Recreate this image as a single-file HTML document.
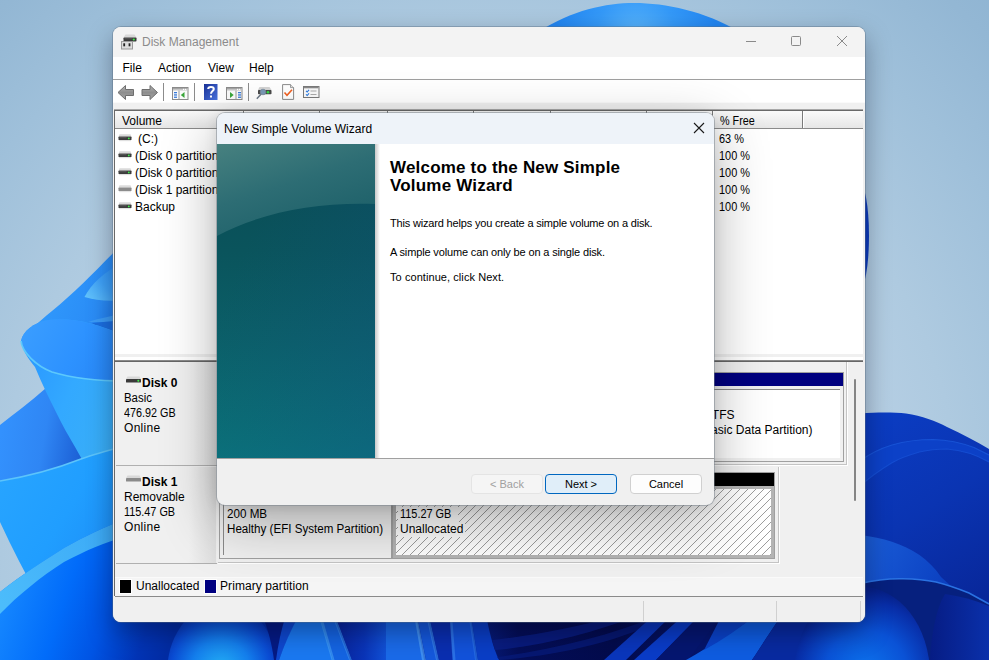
<!DOCTYPE html>
<html>
<head>
<meta charset="utf-8">
<title>Disk Management</title>
<style>
html,body{margin:0;padding:0;}
body{width:989px;height:660px;overflow:hidden;position:relative;background:#b4cbde;font-family:"Liberation Sans",sans-serif;font-size:12px;color:#000;}
.abs{position:absolute;}
#wall{position:absolute;left:0;top:0;width:989px;height:660px;}
/* main window */
#win{position:absolute;left:113px;top:27px;width:752px;height:595px;background:#f0f0f0;border-radius:8px;box-shadow:0 0 0 1px rgba(90,110,130,.4),0 10px 26px rgba(0,0,20,.36);overflow:hidden;}
#titlebar{position:absolute;left:0;top:0;width:752px;height:30px;background:#f3f3f3;}
#title{position:absolute;left:29px;top:8px;font-size:12px;color:#8b8b8b;white-space:nowrap;}
#menubar{position:absolute;left:0;top:30px;width:752px;height:22px;background:#fff;}
.menu{position:absolute;top:4px;font-size:12px;color:#000;white-space:nowrap;}
#mline{position:absolute;left:0;top:52px;width:752px;height:1px;background:#a0a0a0;}
#toolbar{position:absolute;left:0;top:53px;width:752px;height:23px;background:#fff;}
#tshade{position:absolute;left:0;top:75px;width:752px;height:7px;background:#f0f0f0;border-top:1px solid #fafafa;box-sizing:border-box}
/* list view */
#list{position:absolute;left:1px;top:83px;width:748px;height:244px;background:#fff;border-top:1px solid #696969;border-left:1px solid #696969;box-shadow:0 -1px 0 #a8a8a8;}
#lhead{position:absolute;left:0;top:0;width:748px;height:17px;background:linear-gradient(#fafafa,#e6e6e6);border-bottom:1px solid #8a8a8a;}
.hsep{position:absolute;top:0;width:1px;height:17px;background:#7a7a7a;box-shadow:1px 0 0 #fff;}
.htxt{position:absolute;top:3px;font-size:12px;white-space:nowrap;}
.row{position:absolute;left:0;font-size:12px;white-space:nowrap;height:17px;line-height:17px;}

.tsep{position:absolute;top:3px;width:1px;height:18px;background:#8c8c8c;}
.ico{position:absolute;}
#split{position:absolute;left:2px;top:327px;width:748px;height:7px;background:linear-gradient(#f0f0f0 0,#f0f0f0 3px,#fff 3px,#fff 6px,#8a8a8a 6px);border-bottom:1px solid #666;}
#gpane{position:absolute;left:3px;top:335px;width:731px;height:215px;background:#f0f0f0;}
.dlabel{position:absolute;left:0;width:100px;background:linear-gradient(90deg,#f0f0f0 0,#f0f0f0 70%,#e2e2e2 100%);border-right:1px solid #b8b8b8;border-bottom:1px solid #a8a8a8;}
.dl{position:absolute;left:8px;font-size:12px;white-space:nowrap;line-height:15px;}
.dlb{position:absolute;left:26px;font-size:12px;font-weight:bold;white-space:nowrap;line-height:15px;}
#legend{position:absolute;left:2px;top:550px;width:748px;height:18px;background:#f5f5f5;border-top:1px solid #fafafa;border-bottom:1px solid #8a8a8a;}
#vframe{position:absolute;left:1px;top:83px;width:749px;height:486px;border-left:1px solid #696969;pointer-events:none;}
#status{position:absolute;left:0;top:572px;width:752px;height:23px;background:#f0f0f0;}
.ssep{position:absolute;top:2px;width:1px;height:20px;background:#d0d0d0;}

#side{background:#0f626c;}
#h1{position:absolute;left:15px;top:14.5px;font-size:17px;font-weight:bold;line-height:18.8px;white-space:nowrap;letter-spacing:0.19px;}
.p{position:absolute;left:15px;font-size:11px;white-space:nowrap;line-height:13px;}
#csh{position:absolute;left:158px;top:31px;width:5px;height:314px;background:linear-gradient(90deg,#c8c8c8,#fff);}
.part{position:absolute;background:#fff;border:1px solid #a8a8a8;box-shadow:0 0 0 1px #dcdcdc;}
.pt{position:absolute;font-size:12px;white-space:nowrap;line-height:15px;}
/* dialog */
#dlg{position:absolute;left:217px;top:113px;width:497px;height:392px;background:#f0f0f0;border-radius:8px;box-shadow:0 0 0 1px rgba(120,130,140,.5),0 18px 56px rgba(0,0,0,.31),0 2px 14px rgba(0,0,0,.11);overflow:hidden;}
#dtitle{position:absolute;left:0;top:0;width:497px;height:31px;background:#eef3f9;}
#dtt{position:absolute;left:7px;top:9px;font-size:12px;white-space:nowrap;}
#side{position:absolute;left:0;top:31px;width:158px;height:314px;}
#content{position:absolute;left:158px;top:31px;width:339px;height:314px;background:#fff;}
#dsep{position:absolute;left:0;top:345px;width:497px;height:1px;background:#a0a0a0;}
.btn{position:absolute;top:361px;height:18px;width:70px;border:1px solid #d0d0d0;border-radius:4px;background:#fdfdfd;font-size:11px;text-align:center;line-height:18px;}
</style>
</head>
<body>
<svg id="wall" viewBox="0 0 989 660">
<defs>
<radialGradient id="bg" gradientUnits="userSpaceOnUse" cx="480" cy="520" r="800">
<stop offset="0" stop-color="rgb(190,212,230)"/><stop offset="0.5" stop-color="rgb(182,207,228)"/><stop offset="0.6" stop-color="rgb(174,202,224)"/><stop offset="0.75" stop-color="rgb(159,192,218)"/><stop offset="0.875" stop-color="rgb(147,183,212)"/><stop offset="1" stop-color="rgb(138,177,208)"/>
</radialGradient>
<radialGradient id="topb" gradientUnits="userSpaceOnUse" cx="636" cy="34" r="80"><stop offset="0" stop-color="#58b4fb"/><stop offset="0.5" stop-color="#3499f8"/><stop offset="1" stop-color="#2286f2"/></radialGradient>
<linearGradient id="pA" gradientUnits="userSpaceOnUse" x1="50" y1="300" x2="125" y2="330"><stop offset="0" stop-color="#2f97fb"/><stop offset="0.6" stop-color="#2a8cf6"/><stop offset="1" stop-color="#1d74e6"/></linearGradient>
<linearGradient id="lens" gradientUnits="userSpaceOnUse" x1="86" y1="300" x2="120" y2="268"><stop offset="0" stop-color="#66c6fb"/><stop offset="0.5" stop-color="#3fa2f8"/><stop offset="1" stop-color="#2c90f6"/></linearGradient>
<linearGradient id="pBin" gradientUnits="userSpaceOnUse" x1="25" y1="325" x2="125" y2="380"><stop offset="0" stop-color="#3a9dff"/><stop offset="0.5" stop-color="#2d92ff"/><stop offset="1" stop-color="#2684f4"/></linearGradient>
<linearGradient id="pBout" gradientUnits="userSpaceOnUse" x1="30" y1="380" x2="125" y2="420"><stop offset="0" stop-color="#2c9cff"/><stop offset="0.4" stop-color="#33a9ff"/><stop offset="1" stop-color="#39aef6"/></linearGradient>
<linearGradient id="pC" gradientUnits="userSpaceOnUse" x1="0" y1="440" x2="85" y2="455"><stop offset="0" stop-color="#3391fd"/><stop offset="0.5" stop-color="#2f86f4"/><stop offset="0.85" stop-color="#2068dc"/><stop offset="1" stop-color="#1b5ed2"/></linearGradient>
<linearGradient id="pD" gradientUnits="userSpaceOnUse" x1="0" y1="480" x2="125" y2="560"><stop offset="0" stop-color="#27a4ff"/><stop offset="0.5" stop-color="#209eff"/><stop offset="1" stop-color="#1c8cf6"/></linearGradient>
<linearGradient id="pE" gradientUnits="userSpaceOnUse" x1="0" y1="600" x2="165" y2="655"><stop offset="0" stop-color="#1688ff"/><stop offset="0.35" stop-color="#016cfa"/><stop offset="0.6" stop-color="#0054e4"/><stop offset="0.85" stop-color="#0234b6"/><stop offset="1" stop-color="#022ca4"/></linearGradient>
<linearGradient id="rim" gradientUnits="userSpaceOnUse" x1="0" y1="600" x2="125" y2="525"><stop offset="0" stop-color="#4cbcfb"/><stop offset="1" stop-color="#3aa8f6"/></linearGradient>
<radialGradient id="bulb" gradientUnits="userSpaceOnUse" cx="221" cy="668" r="62"><stop offset="0" stop-color="#24aef4"/><stop offset="0.45" stop-color="#1480ee"/><stop offset="0.8" stop-color="#0a4cd4"/><stop offset="1" stop-color="#0734b4"/></radialGradient>
<radialGradient id="ball" gradientUnits="userSpaceOnUse" cx="866" cy="672" r="82"><stop offset="0" stop-color="#0c74ee"/><stop offset="0.5" stop-color="#0a52d6"/><stop offset="0.85" stop-color="#082ea8"/><stop offset="1" stop-color="#062088"/></radialGradient>
<linearGradient id="rdark" gradientUnits="userSpaceOnUse" x1="870" y1="420" x2="980" y2="600"><stop offset="0" stop-color="#0b3cc2"/><stop offset="0.5" stop-color="#0a34b2"/><stop offset="1" stop-color="#08279a"/></linearGradient>
<linearGradient id="rP4" gradientUnits="userSpaceOnUse" x1="865" y1="540" x2="970" y2="600"><stop offset="0" stop-color="#1a5cd6"/><stop offset="0.6" stop-color="#0e46c6"/><stop offset="1" stop-color="#0a36b4"/></linearGradient>
<linearGradient id="navy" gradientUnits="userSpaceOnUse" x1="486" y1="0" x2="700" y2="0"><stop offset="0" stop-color="#061a78"/><stop offset="0.15" stop-color="#040e58"/><stop offset="0.6" stop-color="#030b4c"/><stop offset="1" stop-color="#05156c"/></linearGradient>
<linearGradient id="wsh" x1="0" y1="0" x2="0" y2="1"><stop offset="0" stop-color="#000428" stop-opacity=".45"/><stop offset="1" stop-color="#000428" stop-opacity="0"/></linearGradient>
<linearGradient id="gA" gradientUnits="userSpaceOnUse" x1="338" y1="0" x2="390" y2="0"><stop offset="0" stop-color="#08249c"/><stop offset="0.5" stop-color="#0a34b8"/><stop offset="1" stop-color="#1256dc"/></linearGradient>
<linearGradient id="rr" gradientUnits="userSpaceOnUse" x1="930" y1="0" x2="989" y2="0"><stop offset="0" stop-color="#061c84"/><stop offset="1" stop-color="#0a30aa"/></linearGradient>
</defs>
<rect width="989" height="660" fill="url(#bg)"/>
<!-- top arc -->
<path d="M538 32 C572 10 606 3 634 3 C666 3 704 11 740 32 Z" fill="url(#topb)"/>
<!-- right sliver -->
<ellipse cx="859" cy="236" rx="10" ry="54" fill="#0c3cc0"/>
<!-- left petals -->
<path d="M125 241 C104 262 78 290 52 311 C45 317 38 322 32 329 L125 350 Z" fill="url(#pA)"/>
<path d="M84.500 297 C91 284 104 272 125 261 L125 300 C108 302 95 300 84.500 297 Z" fill="url(#lens)"/>
<path d="M88 322 C100 318 112 316 125 313 L125 322 C112 322 100 322 88 322 Z" fill="#3b9bf6"/>
<path d="M92 323 C104 322 114 321 125 320 L125 345 Z" fill="#1b6ee0"/>
<!-- petal C lower-left -->
<path d="M46 388 C30 402 14 414 0 425 L0 500 L120 500 L120 420 Z" fill="url(#pC)"/>
<!-- petal B cup -->
<path d="M21 341 C23 331 33 323 48 320 C68 317 95 322 125 336 L125 470 L88 470 C76 448 66 432 61 422 C50 400 42 384 35 367 C28 358 22 350 21 341 Z" fill="url(#pBout)"/>
<path d="M21 341 C23 331 33 323 48 320 C68 317 95 322 125 336 L125 381 C100 381 72 378 52 372 C36 366 22 352 21 341 Z" fill="url(#pBin)"/>
<path d="M21 341 C22 352 36 366 52 372 C72 378 100 381 125 381" fill="none" stroke="#62cdfc" stroke-width="1.8" stroke-opacity=".9"/>
<!-- petal D -->
<path d="M0 481 C30 476 58 468 81 459 C95 454 110 450 125 446 L125 600 L40 600 C26 575 12 548 0 522 Z" fill="url(#pD)"/>
<path d="M0 481 C30 476 58 468 81 459 C95 454 110 450 125 446" fill="none" stroke="#5cc4fb" stroke-width="1.6"/>
<!-- petal E (big bottom-left) -->
<path d="M0 592 C20 576 45 560 64 548 C85 536 105 527 125 519 L125 615 L200 615 L200 660 L0 660 Z" fill="url(#pE)"/>
<path d="M0 592 C20 576 45 560 64 548 C85 536 105 527 125 519 L125 537 C105 542 85 551 64 562 C42 576 18 595 0 614 Z" fill="url(#rim)"/>
<!-- bottom strip -->
<rect x="199" y="615" width="291" height="45" fill="#032ea8"/>
<path d="M190 615 C176 630 170 645 168 660 L276 660 C274 640 266 625 254 615 Z" fill="url(#bulb)"/>
<path d="M262 615 L300 615 C290 630 282 645 276 660 L274 660 C272 645 268 628 262 615 Z" fill="#051a84"/>
<path d="M286 615 L300 615 C292 630 284 645 279 660 L276 660 C278 645 281 630 286 615 Z" fill="#0e48d0"/>
<path d="M299 615 L320 615 L333 660 L279 660 C284 645 291 630 299 615 Z" fill="#1a78f0"/>
<path d="M319 615 L333 615 L350 660 L333 660 Z" fill="#1464e2"/>
<path d="M318.500 615 L321.500 615 L334.500 660 L331.500 660 Z" fill="#4aa8f8" opacity=".55"/>
<path d="M332 615 L335 615 L352 660 L349 660 Z" fill="#3f98f4" opacity=".55"/>
<path d="M335 615 L388 615 L388 660 L352 660 Z" fill="url(#gA)"/>
<path d="M386 615 L416 615 L424 660 L386 660 Z" fill="#1a6ae8"/>
<path d="M414 615 L417 615 L426 660 L422 660 Z" fill="#56a6f6" opacity=".6"/>
<path d="M417 615 L427 615 L437 660 L426 660 Z" fill="#1458dc"/>
<path d="M426 615 L429 615 L439 660 L436 660 Z" fill="#3f8cf0" opacity=".6"/>
<path d="M429 615 L451 615 L454 660 L439 660 Z" fill="#0a2eb0"/>
<path d="M450 615 L470 615 L476 660 L453 660 Z" fill="#1252da"/>
<path d="M449.500 615 L452 615 L455.500 660 L452.500 660 Z" fill="#3a86ee" opacity=".6"/>
<path d="M468.500 615 L471 615 L478 660 L475 660 Z" fill="#2f78ea" opacity=".6"/>
<path d="M471 615 L487 615 C490 630 494 648 500 660 L478 660 Z" fill="#0a3ec6"/>
<path d="M486 615 L790 615 L790 660 L499 660 C493 648 489 630 486 615 Z" fill="url(#navy)"/>
<path d="M492 640 C530 636 575 628 620 615 L640 615 C590 634 540 646 495 650 Z" fill="#0a1e84" opacity=".8"/>
<path d="M497 657 C550 650 610 636 660 615 L672 615 C620 642 560 655 500 660 Z" fill="#081a78" opacity=".8"/>
<path d="M604 660 L654 615 L672 615 L626 660 Z" fill="#0a36bc"/>
<path d="M634 660 L684 615 L700 615 L656 660 Z" fill="#0a3cc8"/>
<path d="M656 660 L700 615 L722 615 L688 660 Z" fill="#051670"/>
<path d="M686 660 C712 645 736 630 756 615 L782 615 C770 632 760 648 752 660 Z" fill="#0e5ce0"/>
<path d="M722 615 L756 615 C740 628 722 640 704 650 Z" fill="#0a42c8"/>
<path d="M752 660 C760 648 770 632 782 615 L870 615 L870 660 Z" fill="#082aa0"/>
<!-- right side petals -->
<path d="M860 413.500 C880 412 895 412.500 906 413.500 C922 416 936 421 947 427 C962 434 976 441 989 449 L989 660 L860 660 Z" fill="url(#rdark)"/>
<path d="M860 461 C872 452 882 448 892 445 C906 441 920 439.500 933 439.500 C948 440 962 443 974 447.500 L989 455 L989 462 C975 454 960 450 947 449 C937 449 928 450 919.500 452 C909 455 900 458 892 462.700 C880 470 870 477 860 486 Z" fill="#0e44cc" opacity=".75"/>
<path d="M860 486 C870 477 880 470 892 462.700 C900 458 909 455 919.500 452 C928 450 937 449 947 449 C960 450 975 454 989 462" fill="none" stroke="#1650d4" stroke-width="1.2" opacity=".8"/>
<path d="M860 461 C872 452 882 448 892 445 C906 441 920 439.500 933 439.500 C948 440 962 443 974 447.500 L989 455" fill="none" stroke="#1a58da" stroke-width="1.2" opacity=".8"/>
<path d="M860 535 C872 536.500 882 538.500 892 541.700 C902 545 911 549.500 919.500 555 C928 561 935 568 941 577 C958 592 975 608 989 626 L989 660 L860 660 Z" fill="url(#rP4)"/>
<path d="M860 583.500 C875 580 890 578.500 903 578.800 C915 579 926 580 936 582 C948 585 959 589 969 593 L989 604 L989 660 L860 660 Z" fill="#06207e"/>
<path d="M860 583.500 C875 580 890 578.500 903 578.800 C915 579 926 580 936 582 C948 585 959 589 969 593 L989 604" fill="none" stroke="#2a72e2" stroke-width="1.6"/>
<path d="M930 660 L989 660 L989 606 C975 600 960 596 945 594 C935 610 931 640 930 660 Z" fill="url(#rr)"/>
<ellipse cx="862" cy="675" rx="68" ry="88" fill="url(#ball)"/>
<!-- window shadow onto wallpaper below -->
</svg>

<div id="win">
  <div id="titlebar">
    <svg class="ico" style="left:8px;top:7px" width="17" height="16" viewBox="0 0 17 16">
      <path d="M4.5 0.5 L13.5 0.5 L15.5 3.5 L2.5 3.5 Z" fill="#d8d8d8"/>
      <rect x="2.5" y="3.5" width="13" height="4" rx="0.8" fill="#3a3a3a"/>
      <rect x="3.5" y="4.3" width="8" height="1" fill="#5a5a5a"/>
      <circle cx="12.8" cy="5.5" r="1.1" fill="#3ef04a"/>
      <rect x="0.5" y="7.5" width="11" height="7.5" fill="#dcdcdc" stroke="#9a9a9a" stroke-width="1"/>
      <rect x="2.3" y="9.3" width="1.8" height="3" fill="#222"/>
      <rect x="7.6" y="9.3" width="1.8" height="3" fill="#222"/>
    </svg>
    <div id="title">Disk Management</div>
    <svg class="ico" style="left:632px;top:8px" width="110" height="14" viewBox="0 0 110 14">
      <path d="M1 6.5 H11" stroke="#8a8a8a" stroke-width="1" fill="none"/>
      <rect x="46.5" y="1.5" width="9" height="9" rx="1" stroke="#8a8a8a" stroke-width="1" fill="none"/>
      <path d="M92 1 L102 11 M102 1 L92 11" stroke="#8a8a8a" stroke-width="1" fill="none"/>
    </svg>
  </div>
  <div id="menubar">
    <div class="menu" style="left:9.5px">File</div>
    <div class="menu" style="left:45px">Action</div>
    <div class="menu" style="left:95px">View</div>
    <div class="menu" style="left:136px">Help</div>
  </div>
  <div id="mline"></div>
  <div id="toolbar">
    <!-- back / forward arrows -->
    <svg class="ico" style="left:4px;top:4px" width="42" height="17" viewBox="0 0 42 17"><defs><linearGradient id="ag" x1="0" y1="0" x2="0" y2="1"><stop offset="0" stop-color="#b4b4b4"/><stop offset="0.5" stop-color="#8e8e8e"/><stop offset="1" stop-color="#a4a4a4"/></linearGradient></defs>
      <path d="M1 8.5 L8.5 1.5 L8.5 5.5 L16.5 5.5 L16.5 11.5 L8.5 11.5 L8.5 15.5 Z" fill="url(#ag)" stroke="#6e6e6e" stroke-width="1" stroke-linejoin="round"/>
      <path d="M40.5 8.5 L33 1.5 L33 5.5 L25 5.5 L25 11.5 L33 11.5 L33 15.5 Z" fill="url(#ag)" stroke="#6e6e6e" stroke-width="1" stroke-linejoin="round"/>
    </svg>
    <div class="tsep" style="left:50px"></div>
    <!-- console tree -->
    <svg class="ico" style="left:59px;top:7px" width="17" height="13" viewBox="0 0 17 13">
      <rect x="0.5" y="0.5" width="15.5" height="12" fill="#fafafa" stroke="#8a8a8a"/>
      <rect x="1" y="1" width="14.5" height="2.5" fill="#c6c6c6"/><rect x="1" y="1" width="14.5" height="0.8" fill="#9c9c9c"/><rect x="11" y="1.8" width="1.2" height="1.2" fill="#fff"/><rect x="13" y="1.8" width="1.2" height="1.2" fill="#fff"/>
      <rect x="6.5" y="3.5" width="1" height="9" fill="#9a9a9a"/>
      <rect x="2" y="5" width="3" height="1.3" fill="#3a7ad8"/><rect x="2" y="7.3" width="3" height="1.3" fill="#3a7ad8"/><rect x="2" y="9.6" width="3" height="1.3" fill="#3a7ad8"/>
      <path d="M12.5 5 L12.5 11 L8.8 8 Z" fill="#3aa53a"/>
    </svg>
    <div class="tsep" style="left:81px"></div>
    <!-- help -->
    <svg class="ico" style="left:91px;top:4px" width="14" height="16" viewBox="0 0 14 16">
      <defs><linearGradient id="hg" x1="0" y1="0" x2="1" y2="1"><stop offset="0" stop-color="#1a3296"/><stop offset="1" stop-color="#4a74e0"/></linearGradient></defs>
      <rect x="0" y="0" width="13.5" height="16" fill="url(#hg)"/>
      <path d="M4.2 5 C4.2 2.2 9.8 2.2 9.8 5 C9.8 7 7 7.2 7 9.8" stroke="#fff" stroke-width="2" fill="none"/>
      <rect x="6" y="11.5" width="2" height="2" fill="#fff"/>
    </svg>
    <!-- action pane -->
    <svg class="ico" style="left:113px;top:7px" width="17" height="13" viewBox="0 0 17 13">
      <rect x="0.5" y="0.5" width="15.5" height="12" fill="#fafafa" stroke="#8a8a8a"/>
      <rect x="1" y="1" width="14.5" height="2.5" fill="#c6c6c6"/><rect x="1" y="1" width="14.5" height="0.8" fill="#9c9c9c"/><rect x="11" y="1.8" width="1.2" height="1.2" fill="#fff"/><rect x="13" y="1.8" width="1.2" height="1.2" fill="#fff"/>
      <rect x="9.5" y="3.5" width="1" height="9" fill="#9a9a9a"/>
      <rect x="12" y="5" width="3" height="1.3" fill="#3a7ad8"/><rect x="12" y="7.3" width="3" height="1.3" fill="#3a7ad8"/><rect x="12" y="9.6" width="3" height="1.3" fill="#3a7ad8"/>
      <path d="M4 5 L4 11 L7.7 8 Z" fill="#3aa53a"/>
    </svg>
    <div class="tsep" style="left:135px"></div>
    <!-- rescan -->
    <svg class="ico" style="left:143px;top:6px" width="17" height="14" viewBox="0 0 17 14">
      <path d="M3.5 1 L13.5 1 L15.5 4 L2 4 Z" fill="#d4d4d4"/>
      <rect x="2" y="4" width="13.5" height="4.3" rx="0.8" fill="#4a4a4a"/>
      <circle cx="12" cy="6.2" r="1.3" fill="#35e045"/>
      <circle cx="7" cy="6" r="2.8" fill="#8ab4dc" fill-opacity=".75" stroke="#7a8a9a" stroke-width="0.9"/>
      <path d="M5 8.2 L0.8 12.8" stroke="#6a7684" stroke-width="1.4"/>
    </svg>
    <!-- page check -->
    <svg class="ico" style="left:169px;top:4px" width="13" height="16" viewBox="0 0 13 16">
      <path d="M0.6 0.6 L8.5 0.6 L11.6 3.6 L11.6 15.4 L0.6 15.4 Z" fill="#fff" stroke="#8a8a8a"/>
      <path d="M8.5 0.6 L8.5 3.6 L11.6 3.6" fill="#e0e0e0" stroke="#8a8a8a" stroke-width="0.8"/>
      <path d="M2.5 8.5 L5 11.2 L10 5.8" fill="none" stroke="#f06020" stroke-width="1.6"/>
    </svg>
    <!-- checklist -->
    <svg class="ico" style="left:190px;top:6px" width="17" height="12" viewBox="0 0 17 12">
      <rect x="0.5" y="0.5" width="15.5" height="11" fill="#fafafa" stroke="#7a7a7a"/>
      <rect x="1" y="1" width="14.5" height="1.3" fill="#8a8a8a"/>
      <path d="M3 4.8 L4.2 6 L6 3.8 M3 8.3 L4.2 9.5 L6 7.3" fill="none" stroke="#2a7ae0" stroke-width="1.1"/>
      <rect x="7.5" y="4.5" width="6" height="1" fill="#aaa"/><rect x="7.5" y="8" width="6" height="1" fill="#aaa"/>
    </svg>
  </div>
  <div id="tshade"></div>
  <div id="list">
    <div id="lhead">
      <div class="htxt" style="left:7px">Volume</div>
      <div class="hsep" style="left:128px"></div>
      <div class="hsep" style="left:204px"></div>
      <div class="hsep" style="left:272px"></div>
      <div class="hsep" style="left:358px"></div>
      <div class="hsep" style="left:435px"></div>
      <div class="hsep" style="left:531px"></div>
      <div class="hsep" style="left:597px"></div>
      <div class="htxt" style="left:605px;transform:scaleX(.9);transform-origin:0 0">% Free</div>
      <div class="hsep" style="left:687px"></div>
    </div>
    <svg class="ico" style="left:3px;top:23px" width="14" height="8" viewBox="0 0 14 8"><path d="M1.5 0.3 L12.5 0.3 L13.5 2.6 L0.5 2.6 Z" fill="#dadada"/><rect x="0.5" y="2.6" width="13" height="3.6" rx="0.7" fill="#3c3c3c"/><rect x="1.5" y="3.3" width="7" height="0.9" fill="#5c5c5c"/><circle cx="10.8" cy="4.4" r="0.9" fill="#3ef04a"/><rect x="1" y="6.2" width="12" height="1" fill="#e4e4e4"/></svg>
    <svg class="ico" style="left:3px;top:40px" width="14" height="8" viewBox="0 0 14 8"><path d="M1.5 0.3 L12.5 0.3 L13.5 2.6 L0.5 2.6 Z" fill="#dadada"/><rect x="0.5" y="2.6" width="13" height="3.6" rx="0.7" fill="#3c3c3c"/><rect x="1.5" y="3.3" width="7" height="0.9" fill="#5c5c5c"/><circle cx="10.8" cy="4.4" r="0.9" fill="#3ef04a"/><rect x="1" y="6.2" width="12" height="1" fill="#e4e4e4"/></svg>
    <svg class="ico" style="left:3px;top:57px" width="14" height="8" viewBox="0 0 14 8"><path d="M1.5 0.3 L12.5 0.3 L13.5 2.6 L0.5 2.6 Z" fill="#dadada"/><rect x="0.5" y="2.6" width="13" height="3.6" rx="0.7" fill="#3c3c3c"/><rect x="1.5" y="3.3" width="7" height="0.9" fill="#5c5c5c"/><circle cx="10.8" cy="4.4" r="0.9" fill="#3ef04a"/><rect x="1" y="6.2" width="12" height="1" fill="#e4e4e4"/></svg>
    <svg class="ico" style="left:3px;top:74px" width="14" height="8" viewBox="0 0 14 8"><path d="M1.5 0.3 L12.5 0.3 L13.5 2.6 L0.5 2.6 Z" fill="#dcdcdc"/><rect x="0.5" y="2.6" width="13" height="3.6" rx="0.7" fill="#8c8c8c"/><rect x="1" y="6.2" width="12" height="1" fill="#e4e4e4"/></svg>
    <svg class="ico" style="left:3px;top:91px" width="14" height="8" viewBox="0 0 14 8"><path d="M1.5 0.3 L12.5 0.3 L13.5 2.6 L0.5 2.6 Z" fill="#dadada"/><rect x="0.5" y="2.6" width="13" height="3.6" rx="0.7" fill="#3c3c3c"/><rect x="1.5" y="3.3" width="7" height="0.9" fill="#5c5c5c"/><circle cx="10.8" cy="4.4" r="0.9" fill="#3ef04a"/><rect x="1" y="6.2" width="12" height="1" fill="#e4e4e4"/></svg>
    <div class="row" style="top:20px;left:23px">(C:)</div>
    <div class="row" style="top:37px;left:20px">(Disk 0 partition 1)</div>
    <div class="row" style="top:54px;left:20px">(Disk 0 partition 2)</div>
    <div class="row" style="top:71px;left:20px">(Disk 1 partition 1)</div>
    <div class="row" style="top:88px;left:20px">Backup</div>
    <div class="row" style="top:20px;left:604px;transform:scaleX(.91);transform-origin:0 0">63 %</div>
    <div class="row" style="top:37px;left:604px;transform:scaleX(.91);transform-origin:0 0">100 %</div>
    <div class="row" style="top:54px;left:604px;transform:scaleX(.91);transform-origin:0 0">100 %</div>
    <div class="row" style="top:71px;left:604px;transform:scaleX(.91);transform-origin:0 0">100 %</div>
    <div class="row" style="top:88px;left:604px;transform:scaleX(.91);transform-origin:0 0">100 %</div>
  </div>
  <div id="split"></div>
  <div id="gpane"></div>
<div class="abs" style="left:3px;top:335px;width:101px;height:103px;background:linear-gradient(90deg,#f0f0f0 0,#f0f0f0 72%,#dedede 99%,#fff 100%);border-bottom:1px solid #b0b0b0"></div>
<div class="abs" style="left:3px;top:440px;width:101px;height:96px;background:linear-gradient(90deg,#f0f0f0 0,#f0f0f0 72%,#dedede 99%,#fff 100%);border-bottom:1px solid #b0b0b0"></div>
<div class="abs" style="left:105px;top:335px;width:629px;height:103px;border-right:1px solid #fff;border-bottom:1px solid #fff;box-shadow:inset -1px -1px 0 #c4c4c4"></div>
<div class="abs" style="left:105px;top:440px;width:561px;height:96px;border-right:1px solid #fff;border-bottom:1px solid #fff;box-shadow:inset -1px -1px 0 #c4c4c4"></div>
<svg class="ico" style="left:12px;top:349px" width="17" height="9" viewBox="0 0 17 9"><path d="M2.5 0.5 L14.5 0.5 L16 3 L1 3 Z" fill="#d8d8d8"/><rect x="1" y="3" width="15" height="3.6" rx="0.7" fill="#3a3a3a"/><circle cx="13.3" cy="4.8" r="1" fill="#3ef04a"/></svg>
<svg class="ico" style="left:12px;top:448px" width="17" height="9" viewBox="0 0 17 9"><path d="M2.5 0.5 L14.5 0.5 L16 3 L1 3 Z" fill="#d8d8d8"/><rect x="1" y="3" width="15" height="3.6" rx="0.7" fill="#8a8a8a"/></svg>
<div class="pt" style="left:29px;top:349px;font-weight:bold">Disk 0</div>
<div class="pt" style="left:11px;top:364px;"><span style="display:inline-block;transform:scaleX(0.95);transform-origin:0 0">Basic</span></div>
<div class="pt" style="left:11px;top:379px;"><span style="display:inline-block;transform:scaleX(0.9);transform-origin:0 0">476.92 GB</span></div>
<div class="pt" style="left:11px;top:394px;"><span style="letter-spacing:0.3px">Online</span></div>
<div class="pt" style="left:29px;top:448px;font-weight:bold">Disk 1</div>
<div class="pt" style="left:11px;top:463px;">Removable</div>
<div class="pt" style="left:11px;top:478px;"><span style="display:inline-block;transform:scaleX(0.905);transform-origin:0 0">115.47 GB</span></div>
<div class="pt" style="left:11px;top:493px;"><span style="letter-spacing:0.3px">Online</span></div>
<div class="abs" style="left:106px;top:345px;width:625px;height:90px;background:#f0f0f0;border:1px solid #a0a0a0;box-sizing:border-box"></div><div class="abs" style="left:107px;top:346px;width:623px;height:13px;background:#000080"></div><div class="abs" style="left:110px;top:362px;width:617px;height:69px;background:#fff;border-top:1px solid #8a8a8a;border-left:1px solid #8a8a8a;box-sizing:border-box"></div>
<div class="pt" style="right:130.5px;top:381px">NTFS</div>
<div class="pt" style="right:52.5px;top:396px">Healthy (Boot, Page File, Basic Data Partition)</div>
<div class="abs" style="left:106px;top:445px;width:173px;height:87px;background:#f0f0f0;border:1px solid #a0a0a0;box-sizing:border-box"></div><div class="abs" style="left:107px;top:446px;width:171px;height:13px;background:#000080"></div><div class="abs" style="left:110px;top:462px;width:165px;height:66px;background:#f0f0f0;border-top:1px solid #8a8a8a;border-left:1px solid #8a8a8a;box-sizing:border-box"></div>
<div class="pt" style="left:114px;top:480px;"><span style="display:inline-block;transform:scaleX(0.97);transform-origin:0 0">200 MB</span></div>
<div class="pt" style="left:114px;top:495px;"><span style="display:inline-block;transform:scaleX(0.967);transform-origin:0 0">Healthy (EFI System Partition)</span></div>
<div class="abs" style="left:279px;top:445px;width:383px;height:87px;background:#f0f0f0;border:1px solid #a0a0a0;box-sizing:border-box"></div><div class="abs" style="left:280px;top:446px;width:381px;height:13px;background:#000"></div><div class="abs" style="left:280px;top:459px;width:381px;height:72px;background:#b4b4b4"></div><div class="abs" style="left:283px;top:462px;width:375px;height:66px;background:#fff"></div>
<svg class="ico" style="left:283px;top:462px" width="375" height="66"><defs><pattern id="ht" width="8" height="8" patternUnits="userSpaceOnUse"><path d="M-1 9 L9 -1 M-1 1 L1 -1 M7 9 L9 7" stroke="#7c7c7c" stroke-width="0.75" fill="none"/></pattern></defs><rect width="100%" height="100%" fill="url(#ht)"/></svg>
<div class="pt" style="left:285px;top:480px;background:#fff;padding:0 2px"><span style="display:inline-block;transform:scaleX(0.91);transform-origin:0 0">115.27 GB</span></div>
<div class="pt" style="left:285px;top:495px;background:#fff;padding:0 2px">Unallocated</div>
<div class="abs" style="left:741px;top:352px;width:2px;height:122px;background:#858585;border-radius:1px"></div>
<div id="vframe"></div>
<div id="legend">
    <div class="abs" style="left:5px;top:2px;width:11px;height:13px;background:#000;box-shadow:0 0 0 1px #fff"></div>
    <div class="pt" style="left:21px;top:1px">Unallocated</div>
    <div class="abs" style="left:90px;top:2px;width:11px;height:13px;background:#000080;box-shadow:0 0 0 1px #fff"></div>
    <div class="pt" style="left:105px;top:1px;letter-spacing:0.08px">Primary partition</div>
  </div>
  <div id="status">
    <div class="ssep" style="left:530px"></div>
    <div class="ssep" style="left:663px"></div>
    <div class="ssep" style="left:747px"></div>
  </div>
</div>

<div id="dlg">
  <div id="dtitle"><div id="dtt">New Simple Volume Wizard</div>
    <svg class="ico" style="left:476px;top:9px" width="12" height="12" viewBox="0 0 12 12"><path d="M1 1 L11 11 M11 1 L1 11" stroke="#1a1a1a" stroke-width="1.1" fill="none"/></svg>
  </div>
  <svg id="side" width="158" height="314" viewBox="0 0 158 314">
    <defs>
      <linearGradient id="sbg" x1="0" y1="0" x2="0" y2="1"><stop offset="0" stop-color="#0a4e57"/><stop offset="0.2" stop-color="#0a5059"/><stop offset="0.34" stop-color="#0a545c"/><stop offset="0.62" stop-color="#0b5f68"/><stop offset="0.94" stop-color="#0a7076"/><stop offset="1" stop-color="#0a737a"/></linearGradient>
      <linearGradient id="sbr" x1="0.2" y1="0.3" x2="1" y2="1"><stop offset="0" stop-color="#145087" stop-opacity="0"/><stop offset="1" stop-color="#145087" stop-opacity=".32"/></linearGradient>
      <linearGradient id="stop" x1="0.05" y1="0" x2="0.6" y2="1"><stop offset="0" stop-color="#46807f"/><stop offset="0.5" stop-color="#2d6d74"/><stop offset="1" stop-color="#1d6069"/></linearGradient>
    </defs>
    <rect width="158" height="314" fill="url(#sbg)"/>
    <rect width="158" height="314" fill="url(#sbr)"/>
    <path d="M0 0 L158 0 L158 60 C100 58 45 68 0 92 Z" fill="url(#stop)"/>
  </svg>
  <div id="content">
    <div id="h1">Welcome to the New Simple<br>Volume Wizard</div>
    <div class="p" style="top:73px;letter-spacing:-0.174px">This wizard helps you create a simple volume on a disk.</div>
    <div class="p" style="top:102px;letter-spacing:-0.144px">A simple volume can only be on a single disk.</div>
    <div class="p" style="top:127px;letter-spacing:0.07px">To continue, click Next.</div>
  </div>
  <div id="csh"></div>
  <div id="dsep"></div>
  <div class="btn" style="left:254px;color:#a0a0a0;background:#f5f5f5;border-color:#e4e4e4">&lt; Back</div>
  <div class="btn" style="left:328px;background:#e0eef9;border-color:#0067c0;">Next &gt;</div>
  <div class="btn" style="left:413px">Cancel</div>
</div>
</body>
</html>
